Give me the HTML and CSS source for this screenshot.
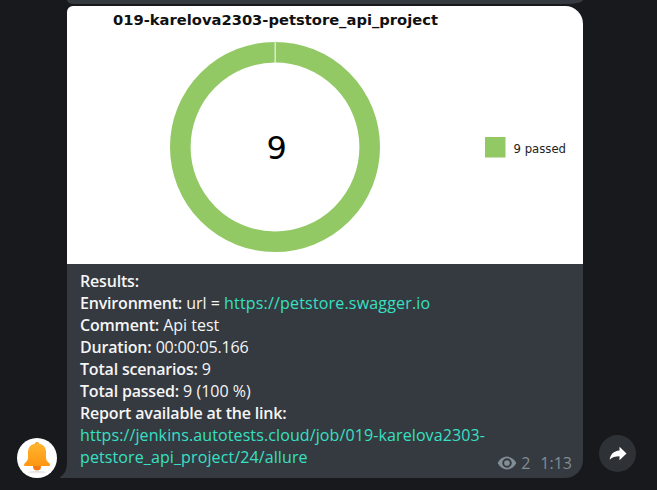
FILE: index.html
```html
<!DOCTYPE html>
<html lang="en">
<head>
<meta charset="utf-8">
<title>Chat</title>
<link rel="stylesheet" href="styles.css">
</head>
<body>
<main class="chat">
  <div class="previous"></div>
  <div class="row">
    <div class="avatar">
      <svg width="40" height="40" viewBox="0 0 40 40">
        <defs>
          <linearGradient id="bell" x1="0" y1="0" x2="0" y2="1"><stop offset="0" stop-color="#ffb52e"/><stop offset="1" stop-color="#ff9612"/></linearGradient>
          <linearGradient id="shade" x1="0" y1="0" x2="0" y2="1"><stop offset="0" stop-color="#d8d8d8"/><stop offset="1" stop-color="#fff"/></linearGradient>
        </defs>
        <circle cx="20" cy="20" r="20" fill="#fff"/>
        <ellipse cx="20" cy="34.5" rx="9" ry="1.5" fill="url(#shade)"/>
        <circle cx="20" cy="28.5" r="4" fill="#f47a18"/>
        <circle cx="20" cy="6.2" r="2.2" fill="#fb9a1c"/>
        <path d="M20 5.500C14 5.500 11 9.500 11 14v5.500c0 2-.8 3.400-2.200 4.700-1.300 1.200-1.800 1.900-1.800 2.800 0 .7.500 1 1.200 1h23.600c.7 0 1.200-.3 1.200-1 0-.9-.5-1.600-1.800-2.800C29.800 22.900 29 21.500 29 19.500V14c0-4.500-3-8.500-9-8.500z" fill="url(#bell)"/>
      </svg>
    </div>
    <article class="bubble">
      <svg class="tail" width="8" height="18" viewBox="0 0 8 18"><path d="M7 0v2C7 9 5 14 .4 16.800c-.6.500-.4 1.200.4 1.200H8V0z" fill="#353940"/></svg>
      <svg class="chart" width="516" height="258" viewBox="67 6 516 258">
        <rect x="67" y="6" width="516" height="258" fill="#fff"/>
        <text class="chart-title" x="113" y="25" textLength="325" lengthAdjust="spacingAndGlyphs">019-karelova2303-petstore_api_project</text>
        <circle cx="275" cy="147" r="94.700" fill="none" stroke="#92c965" stroke-width="20.600"/>
        <path d="M275.200 41v22" stroke="#e4f1d8" stroke-width="1.300"/>
        <text class="chart-total" x="266.500" y="159">9</text>
        <rect x="485" y="137" width="20.500" height="20.500" fill="#92c965"/>
        <text class="chart-label" x="513.500" y="153" textLength="52.500" lengthAdjust="spacingAndGlyphs">9 passed</text>
      </svg>
      <div class="message">
        <p><b>Results:</b></p>
        <p><b>Environment:</b> url = <a>https://petstore.swagger.io</a></p>
        <p><b>Comment:</b> Api test</p>
        <p><b>Duration:</b> <span class="duration">00:00:05.166</span></p>
        <p><b>Total scenarios:</b> 9</p>
        <p><b>Total passed:</b> 9 (100 %)</p>
        <p><b>Report available at the link:</b></p>
        <p class="report"><a>https://jenkins.autotests.cloud/job/019-karelova2303-<br>petstore_api_project/24/allure</a></p>
        <div class="meta">
          <svg width="20" height="14" viewBox="0 0 20 14"><path d="M.6 7C3 3 6 .6 10 .6S17 3 19.400 7C17 11 14 13.400 10 13.400S3 11 .6 7z" fill="#828d94"/><circle cx="10" cy="7" r="3.800" fill="none" stroke="#353940" stroke-width="1.900"/></svg>
          <span class="views">2</span><span class="time">1:13</span>
        </div>
      </div>
    </article>
    <div class="share">
      <svg width="18" height="16" viewBox="0 0 18 16"><path d="M10.500.800 17.500 7.500 10.500 14.300V10.300C6.200 10.300 3.300 11 .7 13.700 1.300 8.800 4.500 5 10.500 4.600z" fill="#fff"/></svg>
    </div>
  </div>
</main>
</body>
</html>
```
FILE: styles.css
```css
* { box-sizing: border-box; }
body { margin: 0; background: #18191d; }
.chat { width: 657px; height: 490px; overflow: hidden; }
.previous { width: 516px; height: 4px; margin: 0 0 2px 67px; background: #353940; border-radius: 0 0 16px 6px / 0 0 4px 4px; }
.row { display: flex; align-items: flex-end; height: 472px; padding-left: 17px; }
.avatar { width: 40px; height: 40px; margin-right: 10px; }
.avatar svg, .chart, .tail, .meta svg, .share svg { display: block; }
.bubble { position: relative; width: 516px; height: 472px; background: #353940; border-radius: 6px 18px 18px 0; }
.tail { position: absolute; left: -7px; bottom: 0; }
.chart { border-radius: 6px 18px 0 0; }
.chart-title { font: bold 14px "DejaVu Sans", sans-serif; fill: #111; }
.chart-total { font: 32px "DejaVu Sans", sans-serif; fill: #000; }
.chart-label { font: 11.500px "DejaVu Sans", sans-serif; fill: #222; }
.message { position: relative; height: 214px; padding: 6px 13px; color: #f5f5f5; font: 16px/22px "Open Sans", sans-serif; }
.message p { margin: 0; white-space: nowrap; }
.message b { font-weight: 600; letter-spacing: -0.190px; }
.message a { color: #37e0c3; letter-spacing: 0.180px; }
.message .report a { letter-spacing: 0.110px; }
.duration { letter-spacing: -0.180px; }
.meta { position: absolute; right: 11px; bottom: 4px; display: flex; align-items: center; color: #828d94; }
.views { margin-left: 4px; }
.time { margin-left: 10px; }
.share { display: flex; align-items: center; justify-content: center; width: 37px; height: 37px; margin: 0 0 6px 16px; border-radius: 50%; background: #2e3237; }
```
